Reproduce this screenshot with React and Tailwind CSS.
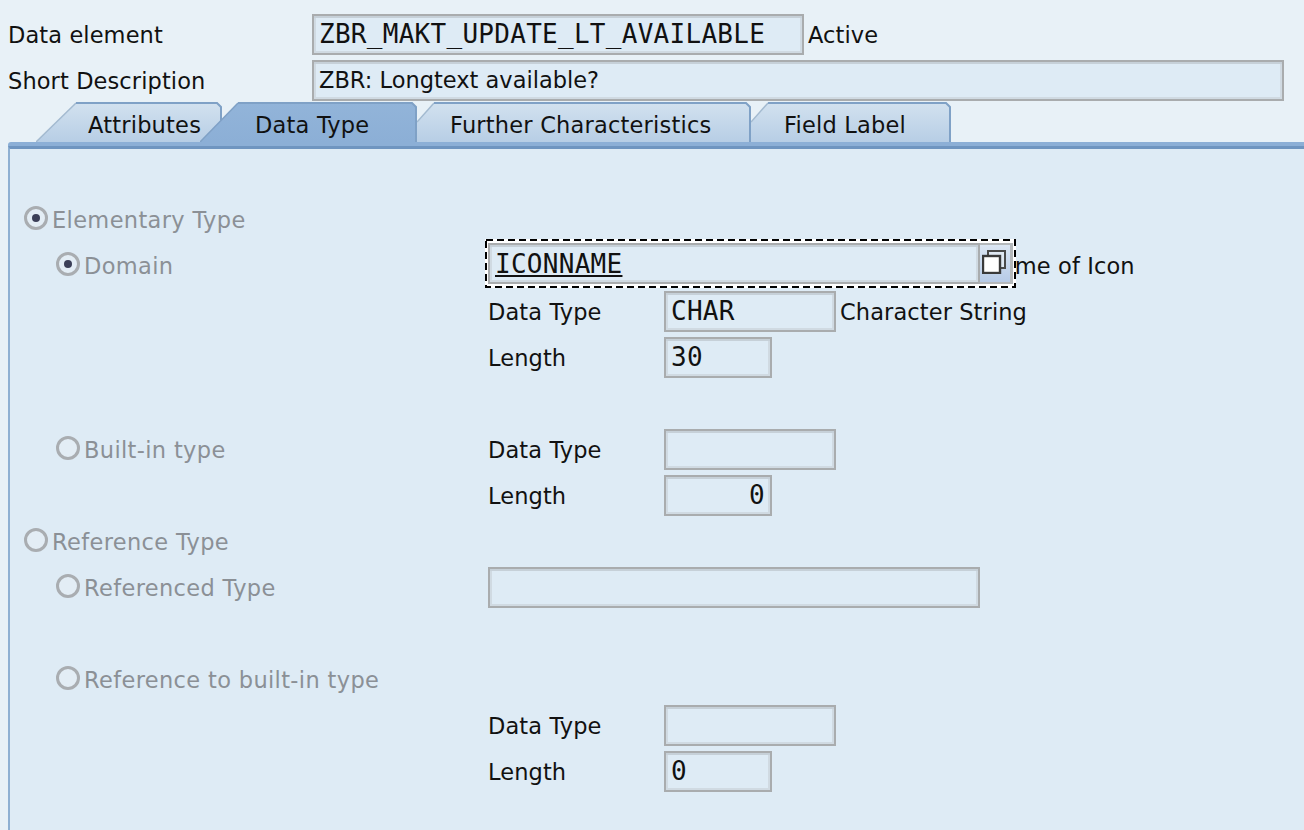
import React from 'react';

const Field = ({ value, width, right, sans, className = '' }) => (
  <div
    className={`h-[41px] shrink-0 border-2 border-[#a9acae] bg-[#deebf5] shadow-[inset_0_2px_0_#c6d0d8,inset_2px_0_0_#d0dae2,inset_-2px_0_0_#d0dae2,inset_0_-2px_0_#d0dae2] px-[5px] flex items-center text-[#111] whitespace-pre leading-none ${sans ? "font-['DejaVu_Sans',sans-serif] text-[22.5px]" : "font-['DejaVu_Sans_Mono',monospace] text-[26px] tracking-[0.28px]"} ${right ? 'justify-end' : ''} ${className}`}
    style={{ width }}
  >
    {value}
  </div>
);

const Label = ({ children, className = '' }) => (
  <span className={`pt-[2px] text-[22.5px] leading-none tracking-[0.1px] text-[#111] whitespace-nowrap ${className}`}>{children}</span>
);

const Radio = ({ checked, label }) => (
  <div className="flex items-center">
    <span className="w-[24px] h-[24px] mt-[-3px] rounded-full border-[3px] border-[#a9adb1] bg-[#e3edf5] flex items-center justify-center shrink-0">
      {checked && <span className="w-[8px] h-[8px] rounded-full bg-[#3b3f58]" />}
    </span>
    <span className="ml-[4px] pt-[2px] text-[22.5px] leading-none tracking-[0.35px] text-[#8b9096] whitespace-nowrap">{label}</span>
  </div>
);

const Tab = ({ label, width, slant, active, cut, textLeft, z }) => {
  const h = 40;
  const fill = active ? 'url(#tabActive)' : 'url(#tabIdle)';
  const startY = cut ? 20 : h;
  return (
    <div className={`relative h-[40px] shrink-0 ${z}`} style={{ width }}>
      <svg className="absolute inset-0" width={width} height={h}>
        <defs>
          <linearGradient id="tabIdle" x1="0" y1="0" x2="0" y2="1">
            <stop offset="0" stopColor="#d2e1ef" />
            <stop offset="1" stopColor="#b7cee5" />
          </linearGradient>
          <linearGradient id="tabActive" x1="0" y1="0" x2="0" y2="1">
            <stop offset="0" stopColor="#92b4d9" />
            <stop offset="1" stopColor="#8cafd6" />
          </linearGradient>
        </defs>
        <polygon
          points={`0,${startY} ${slant},1 ${width - 5},1 ${width - 1},5 ${width - 1},${h} 0,${h}`}
          fill={fill}
        />
        <line
          x1="0"
          y1={startY}
          x2={slant}
          y2="1"
          stroke={active ? '#7fa1c6' : '#a3bad0'}
          strokeWidth="1.5"
        />
        <polyline
          points={`${slant},1 ${width - 5},1 ${width - 1},5 ${width - 1},${h}`}
          fill="none"
          stroke="#7fa1c6"
          strokeWidth="2"
        />
      </svg>
      <span
        className="absolute top-[8px] text-[22.5px] leading-[30px] tracking-[0.2px] text-[#111] whitespace-nowrap"
        style={{ left: textLeft }}
      >
        {label}
      </span>
    </div>
  );
};

const Row = ({ left, children }) => (
  <div className="h-[46px] grid grid-cols-[478px_1fr] grid-rows-[46px] items-center">
    <div className="pl-[14px]">{left}</div>
    <div className="flex items-center min-w-0">{children}</div>
  </div>
);

const Sub = ({ children }) => <div className="pl-[32px]">{children}</div>;

const TypeRow = ({ label, value, width, right, note }) => (
  <div className="flex items-center">
    <Label className="w-[176px] shrink-0">{label}</Label>
    <Field value={value} width={width} right={right} />
    {note && <Label className="ml-[4px]">{note}</Label>}
  </div>
);

export default function App() {
  return (
    <div className="w-[1304px] h-[830px] overflow-hidden bg-[#e8f1f7] font-['DejaVu_Sans',sans-serif] flex flex-col">
      <div className="pt-[11px] px-[8px] shrink-0">
        <div className="h-[46px] flex items-center">
          <Label className="w-[304px]">Data element</Label>
          <Field value="ZBR_MAKT_UPDATE_LT_AVAILABLE" width={492} />
          <Label className="ml-[4px]">Active</Label>
        </div>
        <div className="h-[46px] flex items-center">
          <Label className="w-[304px]">Short Description</Label>
          <Field value="ZBR: Longtext available?" width={972} sans />
        </div>
      </div>

      <div className="flex pl-[36px] mt-[-1px] h-[40px] shrink-0">
        <Tab label="Attributes" width={186} slant={40} textLeft={52} z="z-10" />
        <div className="ml-[-22px] z-20">
          <Tab label="Data Type" width={217} slant={38} textLeft={55} active z="z-20" />
        </div>
        <Tab label="Further Characteristics" width={334} slant={17} textLeft={33} cut z="z-10" />
        <Tab label="Field Label" width={200} slant={17} textLeft={33} cut z="z-10" />
      </div>

      <div className="ml-[8px] h-[4px] shrink-0 bg-[#8cafd6] rounded-tl-[3px]" />
      <div className="ml-[8px] flex-1 bg-[#deebf5] border-l-2 border-l-[#8fb0d2] border-t-[3px] border-t-[#6f95c0] pt-[47px]">
        <Row left={<Radio checked label="Elementary Type" />} />
        <Row left={<Sub><Radio checked label="Domain" /></Sub>}>
          <div className="relative z-10 ml-[-3px] mb-[3px] flex items-center shrink-0 w-[531px] h-[49px] bg-white pl-[3px]">
            <div className="flex items-center bg-[#deebf5]">
              <Field value={<span className="underline">ICONNAME</span>} width={492} />
              <div className="w-[33px] h-[41px] border-y-2 border-r-[3px] border-[#b4b8bb] bg-gradient-to-b from-[#dbe6f3] to-[#b7cbe7] flex justify-center pt-[5px] pr-[3px]">
                <svg width="24" height="24" viewBox="0 0 24 24">
                  <rect x="6" y="1" width="17" height="17" fill="#dfe8f2" stroke="#4a4a4a" strokeWidth="2" />
                  <rect x="1" y="6" width="17" height="17" fill="#fff" stroke="#3a3a3a" strokeWidth="2.4" />
                </svg>
              </div>
            </div>
            <svg className="absolute inset-0" width="531" height="49">
              <rect x="1" y="1" width="529" height="47" fill="none" stroke="#000" strokeWidth="2" strokeDasharray="7 4" />
            </svg>
          </div>
          <Label className="ml-[-32px]">Name of Icon</Label>
        </Row>
        <Row><TypeRow label="Data Type" value="CHAR" width={172} note="Character String" /></Row>
        <Row><TypeRow label="Length" value="30" width={108} /></Row>
        <Row />
        <Row left={<Sub><Radio label="Built-in type" /></Sub>}>
          <TypeRow label="Data Type" value="" width={172} />
        </Row>
        <Row><TypeRow label="Length" value="0" width={108} right /></Row>
        <Row left={<Radio label="Reference Type" />} />
        <Row left={<Sub><Radio label="Referenced Type" /></Sub>}>
          <Field value="" width={492} />
        </Row>
        <Row />
        <Row left={<Sub><Radio label="Reference to built-in type" /></Sub>} />
        <Row><TypeRow label="Data Type" value="" width={172} /></Row>
        <Row><TypeRow label="Length" value="0" width={108} /></Row>
      </div>
    </div>
  );
}
